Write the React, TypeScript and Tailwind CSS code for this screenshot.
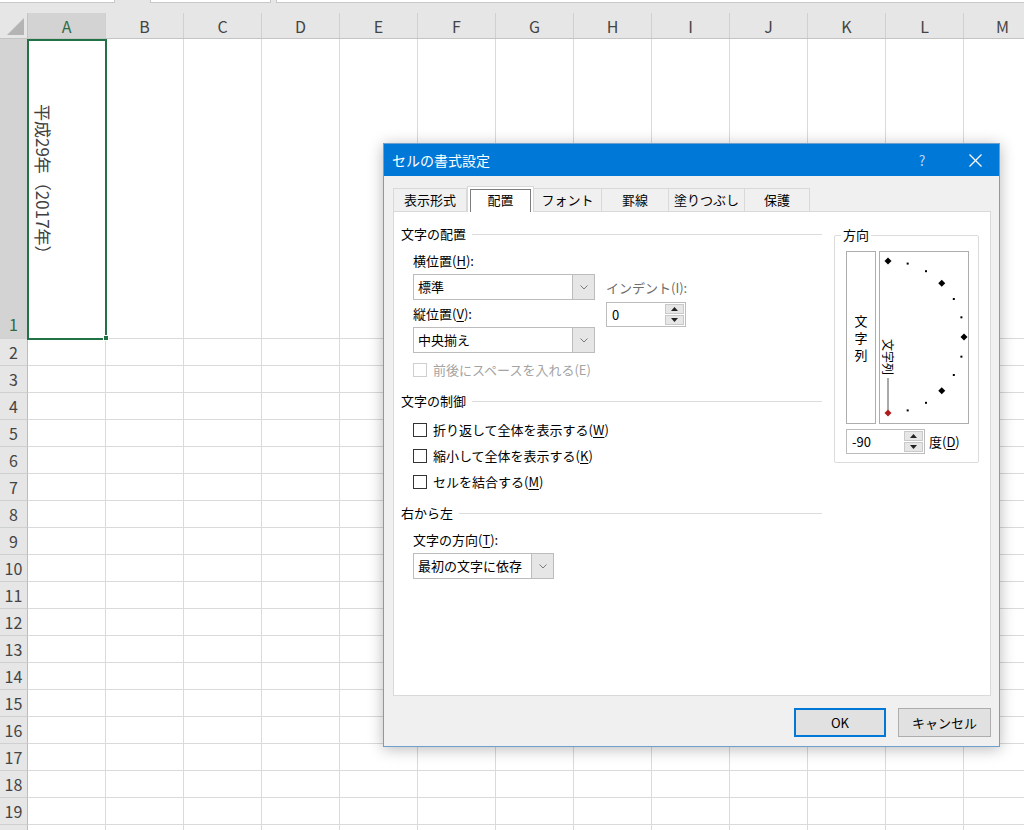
import React from 'react';

const FONT = "font-['Noto_Sans_CJK_JP',sans-serif]";

const COLS = ['A', 'B', 'C', 'D', 'E', 'F', 'G', 'H', 'I', 'J', 'K', 'L', 'M'];
const ROWS = Array.from({ length: 20 }, (_, i) => i + 1);

function U({ children }: { children: React.ReactNode }) {
  return <span className="underline underline-offset-2 decoration-1">{children}</span>;
}

function Sheet() {
  return (
    <div className="flex flex-col">
      <div className="h-[13px] bg-[#e6e6e6] flex items-start shrink-0">
        <div className="w-[115px] h-[3px] bg-white border-b border-r border-[#c8c8c8]" />
        <div className="ml-[35px] w-[121px] h-[3px] bg-white border-b border-x border-[#c8c8c8]" />
        <div className="ml-[5px] flex-1 h-[3px] bg-white border-b border-l border-[#c8c8c8]" />
      </div>
      <div className="flex h-[26px] shrink-0 bg-[#e6e6e6] border-b border-[#c4c4c4]">
        <div className="w-[28px] shrink-0 relative border-r border-[#c4c4c4]">
          <svg width="28" height="26" className="absolute inset-0">
            <polygon points="24,5 24,22 7,22" fill="#b4b4b4" />
          </svg>
        </div>
        {COLS.map((c) => (
          <div
            key={c}
            className={`w-[78px] shrink-0 flex items-center justify-center text-[16px] border-r border-[#d0d0d0] ${
              c === 'A' ? 'bg-[#d3d3d3] text-[#2f6b47]' : 'text-[#444444]'
            }`}
          >
            {c}
          </div>
        ))}
      </div>
      {ROWS.map((r) => (
        <div key={r} className={`flex shrink-0 ${r === 1 ? 'h-[300px]' : 'h-[27px]'}`}>
          <div
            className={`w-[28px] shrink-0 flex justify-center text-[16px] border-r border-b border-r-[#bdbdbd] border-b-[#d0d0d0] ${
              r === 1 ? 'items-end pb-[2px] bg-[#d3d3d3] text-[#2f6b47]' : 'items-center bg-[#e6e6e6] text-[#444444]'
            }`}
          >
            {r < 20 ? r : null}
          </div>
          {COLS.map((c) => (
            <div key={c} className="w-[78px] shrink-0 border-r border-b border-[#dadada]">
              {r === 1 && c === 'A' && (
                <div className="h-full flex items-center pl-[7px] pb-[10px]">
                  <span className="[writing-mode:vertical-rl] [text-orientation:sideways] text-[17px] leading-none text-[#404040]">
                    平成29年（2017年）
                  </span>
                </div>
              )}
            </div>
          ))}
        </div>
      ))}
    </div>
  );
}

function SectionHeader({ label, className = '' }: { label: string; className?: string }) {
  return (
    <div className={`flex items-center h-[20px] w-[421px] ${className}`}>
      <span>{label}</span>
      <div className="ml-[6px] flex-1 border-t border-[#dcdcdc]" />
    </div>
  );
}

function Chevron() {
  return (
    <svg width="8" height="5">
      <polyline points="0.5,0.5 4,4 7.5,0.5" fill="none" stroke="#7a7a7a" strokeWidth="1" />
    </svg>
  );
}

function Select({ value, w }: { value: string; w: string }) {
  return (
    <div className={`flex h-[26px] border border-[#bcbcbc] bg-white ${w}`}>
      <div className="flex-1 flex items-center pl-[4px]">{value}</div>
      <div className="w-[22px] bg-[#e6e6e6] border-l border-[#bcbcbc] flex items-center justify-center">
        <Chevron />
      </div>
    </div>
  );
}

function Spin({ value, w }: { value: string; w: string }) {
  return (
    <div className={`flex h-[25px] border border-[#bcbcbc] bg-white ${w}`}>
      <div className="flex-1 flex items-center pl-[5px]">{value}</div>
      <div className="w-[19px] flex flex-col my-[1px] mr-[1px] gap-[1px]">
        <div className="flex-1 bg-[#e6e6e6] border border-[#c9c9c9] flex items-center justify-center">
          <svg width="7" height="4">
            <polygon points="3.5,0 7,4 0,4" fill="#222222" />
          </svg>
        </div>
        <div className="flex-1 bg-[#e6e6e6] border border-[#c9c9c9] flex items-center justify-center">
          <svg width="7" height="4">
            <polygon points="0,0 7,0 3.5,4" fill="#222222" />
          </svg>
        </div>
      </div>
    </div>
  );
}

function Check({ children, disabled, className = '' }: { children: React.ReactNode; disabled?: boolean; className?: string }) {
  return (
    <div className={`flex items-center h-[20px] ${disabled ? 'text-[#a3a3a3]' : ''} ${className}`}>
      <div className={`w-[14px] h-[14px] border bg-white ${disabled ? 'border-[#cfcfcf]' : 'border-[#333333]'}`} />
      <span className="ml-[6px]">{children}</span>
    </div>
  );
}

function Dial() {
  const cx = 8;
  const cy = 85;
  const rad = 76;
  const angles = Array.from({ length: 13 }, (_, i) => 90 - i * 15);
  return (
    <div className="w-[90px] h-[173px] border border-[#adadad] bg-white">
      <svg width="88" height="171">
        {angles.map((a) => {
          const x = cx + rad * Math.cos((a * Math.PI) / 180);
          const y = cy - rad * Math.sin((a * Math.PI) / 180);
          if (a === -90) {
            return <polygon key={a} points={`${x},${y - 3.5} ${x + 3.5},${y} ${x},${y + 3.5} ${x - 3.5},${y}`} fill="#b01c1c" />;
          }
          if (a % 45 === 0) {
            return <polygon key={a} points={`${x},${y - 3.5} ${x + 3.5},${y} ${x},${y + 3.5} ${x - 3.5},${y}`} fill="#000000" />;
          }
          return <rect key={a} x={x - 1} y={y - 1} width="2" height="2" fill="#000000" />;
        })}
        <line x1={cx} y1="126" x2={cx} y2="158" stroke="#555555" strokeWidth="1" />
        <g transform={`translate(${cx},${cy + 2}) rotate(90)`}>
          <text x="0" y="0" dominantBaseline="central" fontSize="12" fill="#000000" fontFamily="Noto Sans CJK JP, sans-serif">
            文字列
          </text>
        </g>
      </svg>
    </div>
  );
}

function Dialog() {
  const tabs = [
    { label: '表示形式', w: 'w-[74px]' },
    { label: '配置', w: 'w-[67px]', active: true },
    { label: 'フォント', w: 'w-[68px]' },
    { label: '罫線', w: 'w-[67px]' },
    { label: '塗りつぶし', w: 'w-[76px]' },
    { label: '保護', w: 'w-[65px]' },
  ];
  return (
    <div className="absolute left-[383px] top-[143px] w-[617px] h-[604px] border border-[#6f9fce] bg-[#f0f0f0] shadow-[0_2px_14px_rgba(0,0,0,0.28)] flex flex-col text-[13px] text-black">
      <div className="h-[32px] bg-[#0078d7] flex items-center shrink-0">
        <span className="pl-[8px] text-[14px] text-white">セルの書式設定</span>
        <div className="ml-auto flex items-center">
          <div className="w-[46px] text-center text-[14px] text-[#b7d6f3]">?</div>
          <div className="w-[7px]" />
          <div className="w-[46px] flex justify-center">
            <svg width="13" height="13">
              <line x1="0.5" y1="0.5" x2="12.5" y2="12.5" stroke="#ffffff" strokeWidth="1.2" />
              <line x1="12.5" y1="0.5" x2="0.5" y2="12.5" stroke="#ffffff" strokeWidth="1.2" />
            </svg>
          </div>
          <div className="w-[1px]" />
        </div>
      </div>
      <div className="pl-[9px] pt-[10px]">
        <div className="flex items-end h-[26px] -mb-[1px] relative z-10">
          {tabs.map((t, i) =>
            t.active ? (
              <div key={t.label} className={`${t.w} h-[26px] bg-white border-x border-t border-[#d9d9d9] relative flex items-center justify-center`}>
                <div className="absolute left-[2px] right-[2px] top-[2px] bottom-0 border border-b-0 border-[#7d7d7d]" />
                <span>{t.label}</span>
              </div>
            ) : (
              <div
                key={t.label}
                className={`${t.w} h-[23px] mb-[1px] bg-[#f0f0f0] border-t border-r border-[#d9d9d9] ${i === 0 ? 'border-l' : ''} flex items-center justify-center`}
              >
                {t.label}
              </div>
            )
          )}
        </div>
        <div className="w-[598px] h-[485px] bg-white border border-[#d9d9d9] flex">
          <div className="w-[440px] pl-[7px] flex flex-col">
            <SectionHeader label="文字の配置" className="mt-[12px]" />
            <div className="flex pl-[12px]">
              <div className="w-[182px] flex flex-col">
                <div className="h-[20px] mt-[7px] flex items-center">
                  横位置(<U>H</U>):
                </div>
                <div className="mt-[3px]">
                  <Select value="標準" w="w-[182px]" />
                </div>
                <div className="h-[20px] mt-[4px] flex items-center">
                  縦位置(<U>V</U>):
                </div>
                <div className="mt-[3px]">
                  <Select value="中央揃え" w="w-[182px]" />
                </div>
              </div>
              <div className="ml-[11px] flex flex-col">
                <div className="h-[20px] mt-[34px] flex items-center text-[#6d6d6d]">インデント(I):</div>
                <div className="mt-[4px]">
                  <Spin value="0" w="w-[80px]" />
                </div>
              </div>
            </div>
            <Check disabled className="ml-[12px] mt-[7px]">
              前後にスペースを入れる(E)
            </Check>
            <SectionHeader label="文字の制御" className="mt-[11px]" />
            <Check className="ml-[12px] mt-[9px]">
              折り返して全体を表示する(<U>W</U>)
            </Check>
            <Check className="ml-[12px] mt-[6px]">
              縮小して全体を表示する(<U>K</U>)
            </Check>
            <Check className="ml-[12px] mt-[6px]">
              セルを結合する(<U>M</U>)
            </Check>
            <SectionHeader label="右から左" className="mt-[11px]" />
            <div className="ml-[12px] h-[20px] mt-[7px] flex items-center">
              文字の方向(<U>T</U>):
            </div>
            <div className="ml-[12px] mt-[3px]">
              <Select value="最初の文字に依存" w="w-[141px]" />
            </div>
          </div>
          <div className="w-[145px] mt-[23px]">
            <div className="relative h-[228px] border border-[#dcdcdc] rounded-[2px] pl-[11px] pt-[15px]">
              <span className="absolute left-[6px] -top-[11px] bg-white px-[2px]">方向</span>
              <div className="flex gap-[3px]">
                <div className="w-[30px] h-[173px] border border-[#adadad] bg-white flex flex-col items-center justify-center leading-[17px]">
                  <span>文</span>
                  <span>字</span>
                  <span>列</span>
                </div>
                <Dial />
              </div>
              <div className="flex items-center mt-[5px]">
                <Spin value="-90" w="w-[79px]" />
                <span className="ml-[4px]">
                  度(<U>D</U>)
                </span>
              </div>
            </div>
          </div>
        </div>
        <div className="flex justify-end gap-[12px] mt-[12px] w-[598px]">
          <div className="w-[92px] h-[29px] bg-[#e1e1e1] border-2 border-[#0078d7] flex items-center justify-center">OK</div>
          <div className="w-[93px] h-[29px] bg-[#e1e1e1] border border-[#adadad] flex items-center justify-center">キャンセル</div>
        </div>
      </div>
    </div>
  );
}

export default function App() {
  return (
    <div className={`relative w-[1024px] h-[830px] overflow-hidden bg-white ${FONT}`}>
      <Sheet />
      <div className="absolute left-[27px] top-[39px] w-[80px] h-[301px] border-2 border-[#217346] pointer-events-none" />
      <div className="absolute left-[103px] top-[335px] w-[6px] h-[6px] bg-[#217346] border border-white" />
      <Dialog />
    </div>
  );
}
